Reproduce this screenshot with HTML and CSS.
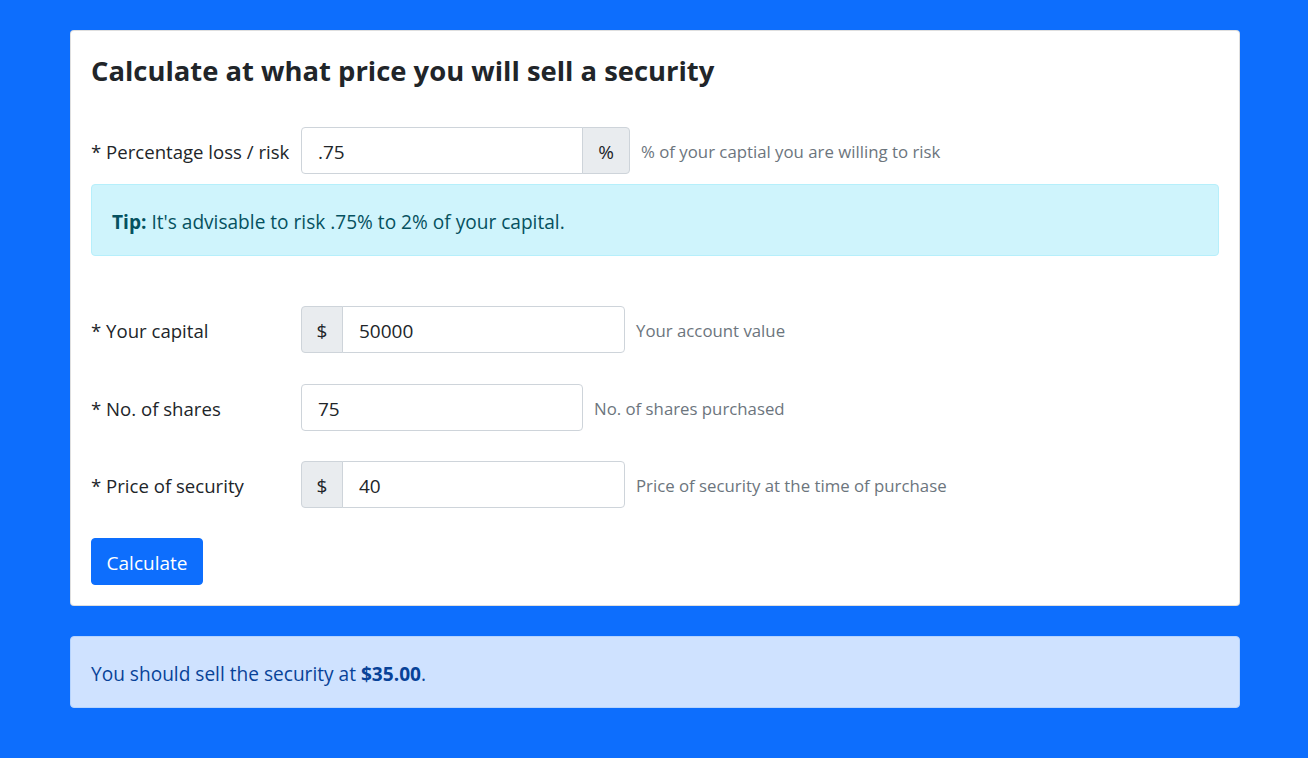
FILE: index.html
```html
<!DOCTYPE html>
<html lang="en">
<head>
<meta charset="utf-8">
<title>Sell price calculator</title>
<link rel="stylesheet" href="styles.css">
</head>
<body>
<main class="container">
  <section class="card">
    <h1 class="title">Calculate at what price you will sell a security</h1>
    <div class="row row-first">
      <label class="label">* Percentage loss / risk</label>
      <div class="group">
        <div class="input input-wide">.75</div>
        <div class="addon addon-right">%</div>
      </div>
      <span class="help">% of your captial you are willing to risk</span>
    </div>
    <div class="alert alert-info"><strong>Tip:</strong> It's advisable to risk .75% to 2% of your capital.</div>
    <div class="row row-capital">
      <label class="label">* Your capital</label>
      <div class="group">
        <div class="addon addon-left">$</div>
        <div class="input input-after">50000</div>
      </div>
      <span class="help">Your account value</span>
    </div>
    <div class="row">
      <label class="label">* No. of shares</label>
      <div class="group">
        <div class="input input-alone">75</div>
      </div>
      <span class="help">No. of shares purchased</span>
    </div>
    <div class="row row-last">
      <label class="label">* Price of security</label>
      <div class="group">
        <div class="addon addon-left">$</div>
        <div class="input input-after">40</div>
      </div>
      <span class="help">Price of security at the time of purchase</span>
    </div>
    <button class="btn" type="button">Calculate</button>
  </section>
  <div class="alert alert-primary result">You should sell the security at <strong>$35.00</strong>.</div>
</main>
</body>
</html>
```
FILE: styles.css
```css
* { box-sizing: border-box; }
html, body { margin: 0; padding: 0; }
body {
  background: #0d6efd;
  font-family: "Open Sans", "Noto Sans", sans-serif;
  color: #212529;
  font-size: 18.6px;
  height: 758px;
}
.container {
  width: 1170px;
  margin: 30px 0 0 70px;
}
.card {
  background: #fff;
  border: 1px solid rgba(0,0,0,.125);
  border-radius: 4px;
  padding: 20px 20px 20px;
}
.title {
  margin: 0;
  font-size: 27.4px;
  font-weight: 700;
  line-height: 40px;
}
.row {
  display: flex;
  align-items: center;
  height: 47px;
  margin-top: 31px;
}
.row-first { margin-top: 36px; }
.row-capital { margin-top: 50px; }
.row-last { margin-top: 30px; }
.label {
  width: 210px;
  flex: none;
  padding-top: 2px;
}
.group {
  display: flex;
  height: 47px;
}
.input {
  border: 1px solid #ced4da;
  border-radius: 4px;
  background: #fff;
  padding: 2px 16px 0;
  display: flex;
  align-items: center;
  font-size: 19px;
}
.input-wide { width: 282px; border-radius: 4px 0 0 4px; }
.input-after { width: 283px; border-radius: 0 4px 4px 0; margin-left: -1px; }
.input-alone { width: 282px; }
.addon {
  background: #e9ecef;
  border: 1px solid #ced4da;
  display: flex;
  align-items: center;
  justify-content: center;
  padding-top: 2px;
  font-size: 19px;
}
.addon-right { width: 48px; border-radius: 0 4px 4px 0; margin-left: -1px; }
.addon-left { width: 42px; border-radius: 4px 0 0 4px; }
.help {
  margin-left: 11px;
  color: #6c757d;
  font-size: 16.8px;
  padding-top: 2px;
}
.alert {
  border: 1px solid;
  border-radius: 4px;
  height: 72px;
  line-height: 70px;
  padding: 2px 20px 0;
  font-size: 19.1px;
}
.alert-info {
  background: #cff4fc;
  border-color: #b6effb;
  color: #055160;
  margin-top: 10px;
}
.alert-primary {
  background: #cfe2ff;
  border-color: #b6d4fe;
  color: #084298;
}
.result { margin-top: 30px; }
.btn {
  display: block;
  margin-top: 30px;
  background: #0d6efd;
  color: #fff;
  border: 1px solid #0d6efd;
  border-radius: 4px;
  height: 47px;
  width: 112px;
  font-family: inherit;
  font-size: 19px;
  padding: 2px 0 0;
}
```
